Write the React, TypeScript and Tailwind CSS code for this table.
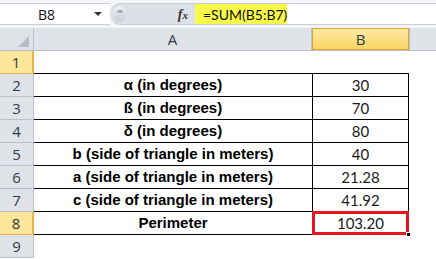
import React from 'react';

const rows = [
  { n: 1, label: '', value: '' },
  { n: 2, label: 'α (in degrees)', value: '30' },
  { n: 3, label: 'ß (in degrees)', value: '70' },
  { n: 4, label: 'δ (in degrees)', value: '80' },
  { n: 5, label: 'b (side of triangle in meters)', value: '40' },
  { n: 6, label: 'a (side of triangle in meters)', value: '21.28' },
  { n: 7, label: 'c (side of triangle in meters)', value: '41.92' },
  { n: 8, label: 'Perimeter', value: '103.20' },
  { n: 9, label: '', value: '' },
];

const cellFont = { fontFamily: 'Lato, "Liberation Sans", sans-serif' };
const labelFont = { fontFamily: '"Liberation Sans", Arial, sans-serif' };
const uiFont = { fontFamily: '"Open Sans", "Noto Sans", sans-serif' };

export default function App() {
  return (
    <div className="w-[436px] h-[259px] overflow-hidden bg-white">
      {/* formula bar */}
      <div className="h-[28px] bg-[#f3f5f8] pt-[3px] pb-[3px] flex">
        <div className="w-[110px] flex items-center bg-white border-y border-[#c9ced6]">
          <span className="ml-[38px] text-[14px] text-[#111]" style={uiFont}>B8</span>
          <span className="ml-auto mr-[8px] w-0 h-0 border-x-[4px] border-x-transparent border-t-[4px] border-t-[#333]" />
        </div>
        <div className="w-[85px] flex items-center bg-[#dde1e7] rounded-l-full border-y border-[#c9ced6]">
          <span className="ml-[3px] w-[13px] h-[16px] rounded-full bg-gradient-to-b from-[#eef0f3] to-[#c9ced6] flex items-start justify-center pt-[4px]">
            <span className="w-[6px] h-[3px] rounded-full bg-[#a7adb6]" />
          </span>
          <span className="ml-auto mr-[7px] text-[14px] italic font-bold text-[#333]" style={{ fontFamily: '"Liberation Serif", serif' }}>
            f<span className="text-[11px]">x</span>
          </span>
        </div>
        <div className="flex-1 flex items-center bg-white border-y border-[#c9ced6]">
          <span className="h-full w-[92px] bg-[#f9f94a] pl-[8px] flex items-center text-[14px] text-[#111]" style={cellFont}>
            =SUM(B5:B7)
          </span>
        </div>
      </div>

      {/* column header */}
      <div className="h-[23px] flex bg-[#dfe3e8] border-b border-[#b9c0c9]">
        <div className="w-[34px] border-r border-[#b9c0c9] relative">
          <span className="absolute right-[4px] bottom-[3px] w-0 h-0 border-l-[11px] border-l-transparent border-b-[11px] border-b-[#b7bcc3]" />
        </div>
        <div className="w-[278px] border-r border-[#b9c0c9] flex items-center justify-center text-[15px] text-[#2f3a48]" style={uiFont}>
          A
        </div>
        <div className="w-[97px] bg-gradient-to-b from-[#fde9a4] to-[#f9d560] border border-[#e0a43a] flex items-center justify-center text-[15px] text-[#2f3a48]" style={uiFont}>
          B
        </div>
        <div className="flex-1 border-l border-[#b9c0c9]" />
      </div>

      {/* rows */}
      {rows.map((r) => {
        const sel = r.n === 1 || r.n === 8;
        const inTable = r.n >= 2 && r.n <= 8;
        return (
          <div key={r.n} className="h-[23px] flex">
            <div
              className={`w-[34px] flex items-center justify-center text-[15px] text-[#2f3a48] border-b ${
                sel ? 'bg-[#fee69a] border-r-2 border-r-[#eab34b] border-b-[#eab34b]' : 'bg-[#dfe3e8] border-r border-r-[#b9c0c9] border-b-[#b9c0c9]'
              }`}
              style={uiFont}
            >
              {r.n}
            </div>
            <div
              className={`w-[278px] flex items-center justify-center pt-[1px] text-[15px] font-bold text-black ${
                r.n <= 8 ? 'border-b border-black' : ''
              }`}
              style={labelFont}
            >
              {r.label}
            </div>
            <div
              className={`w-[97px] relative flex items-center justify-center pt-[1px] text-[15px] text-[#1b1b1b] ${
                inTable ? 'border-b border-l border-r border-black' : r.n === 1 ? 'border-b border-black' : ''
              }`}
              style={cellFont}
            >
              {r.value}
              {r.n === 8 && (
                <>
                  <span className="absolute -left-[1px] -top-[1px] -right-[1px] -bottom-[1px] border-[3px] border-[#e8141b]" />
                  <span className="absolute -right-[3px] -bottom-[3px] w-[5px] h-[5px] bg-black border border-white" />
                </>
              )}
            </div>
            <div className="flex-1" />
          </div>
        );
      })}
    </div>
  );
}
